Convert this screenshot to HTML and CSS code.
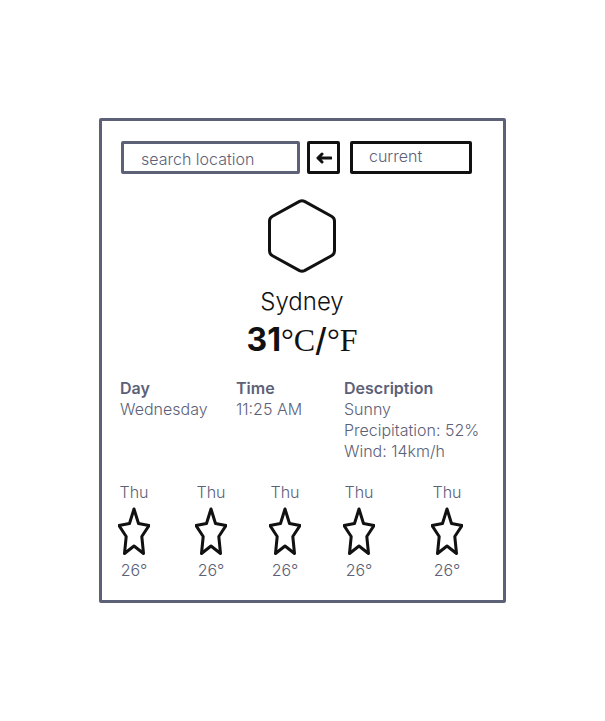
FILE: index.html
```html
<!DOCTYPE html>
<html lang="en">
<head>
<meta charset="utf-8">
<meta name="viewport" content="width=device-width, initial-scale=1">
<title>Weather</title>
<link rel="stylesheet" href="styles.css">
</head>
<body>
<svg class="defs" aria-hidden="true">
  <symbol id="star" viewBox="0 0 32 48">
    <path d="M16 2 L20.5 16.5 L31 18.5 L23.8 29.5 L25.5 46.5 L16 39 L6.500 46.5 L8.200 29.5 L1 18.500 L11.5 16.5 Z"/>
  </symbol>
</svg>
<main class="card">
  <form class="controls">
    <input class="search" type="text" placeholder="search location" aria-label="search location">
    <button class="go" type="button" aria-label="Search">
      <svg class="arrow" viewBox="0 0 16 12"><path d="M15 6 H2 M6 2 L2 6 L6 10"/></svg>
    </button>
    <button class="current" type="button">current</button>
  </form>
  <section class="now">
    <svg class="hexagon" viewBox="0 0 68 74"><path d="M31.500 2.400 Q34 1.200 36.500 2.400 L63.500 17.300 Q66.500 19 66.500 22 V52 Q66.500 55 63.500 56.700 L36.500 71.600 Q34 72.800 31.500 71.600 L4.500 56.700 Q1.500 55 1.500 52 V22 Q1.500 19 4.500 17.300 Z"/></svg>
    <h1 class="city">Sydney</h1>
    <p class="temp"><strong>31</strong><span class="unit">°C</span>/<span class="unit">°F</span></p>
  </section>
  <dl class="details">
    <div><dt>Day</dt><dd>Wednesday</dd></div>
    <div><dt>Time</dt><dd>11:25 AM</dd></div>
    <div><dt>Description</dt><dd>Sunny</dd><dd>Precipitation: 52%</dd><dd>Wind: 14km/h</dd></div>
  </dl>
  <ul class="forecast">
    <li>Thu<svg class="star"><use href="#star"/></svg>26°</li>
    <li>Thu<svg class="star"><use href="#star"/></svg>26°</li>
    <li>Thu<svg class="star"><use href="#star"/></svg>26°</li>
    <li>Thu<svg class="star"><use href="#star"/></svg>26°</li>
    <li>Thu<svg class="star"><use href="#star"/></svg>26°</li>
  </ul>
</main>
</body>
</html>
```
FILE: styles.css
```css
* { box-sizing: border-box; }
body {
  margin: 0;
  min-height: 100vh;
  display: flex;
  align-items: center;
  justify-content: center;
  background: #fff;
  color: #5c6178;
  font: 350 16px/21px Inter, "Liberation Sans", sans-serif;
}
h1, p, dl, dd, ul { margin: 0; padding: 0; }
.defs { position: absolute; width: 0; height: 0; }
svg { fill: none; stroke: #111; stroke-width: 3; stroke-linejoin: round; stroke-linecap: round; }
.card {
  width: 100%;
  max-width: 407px;
  padding: 20px 24px 19px 16px;
  border: 3px solid #5c6178;
  border-radius: 2px;
}
.controls {
  display: flex;
  padding: 0 7px 0 3px;
}
.search, .go, .current {
  height: 33px;
  border: 3px solid #111;
  border-radius: 2px;
  background: #fff;
  color: inherit;
  font: inherit;
}
.search {
  flex: 1 1 179px;
  min-width: 0;
  padding: 2px 0 0 17px;
  border-color: #5c6178;
}
.search::placeholder { color: inherit; opacity: 1; }
.go {
  display: grid;
  place-items: center;
  width: 33px;
  margin: 0 10px 0 7px;
  padding: 0;
}
.arrow { width: 16px; height: 12px; }
.current {
  flex: 1 1 122px;
  padding: 0 16px 3px;
  text-align: left;
}
.now {
  display: flex;
  flex-direction: column;
  align-items: center;
  padding: 25px 0 0 7px;
  color: #111;
}
.hexagon { width: 68px; height: 74px; }
.city { margin-top: 13px; font-size: 24px; line-height: 32px; font-weight: 350; }
.temp { margin-top: 2px; font-size: 32px; line-height: 40px; font-weight: 500; }
.temp strong { font-weight: 700; }
.unit { font-family: "Liberation Serif", serif; font-weight: 400; }
.details {
  display: grid;
  grid-template-columns: 116fr 108fr 135fr;
  margin-top: 18px;
  padding-left: 2px;
}
.details div { white-space: nowrap; min-width: 0; }
dt { font-weight: 600; }
.forecast {
  display: grid;
  grid-template-columns: 77fr 74fr 74fr 88fr 48fr;
  margin-top: 20px;
  list-style: none;
}
.forecast li {
  display: flex;
  flex-direction: column;
  align-items: center;
  width: 32px;
}
.star { width: 32px; height: 48px; margin: 4px 0 5px; }
```
